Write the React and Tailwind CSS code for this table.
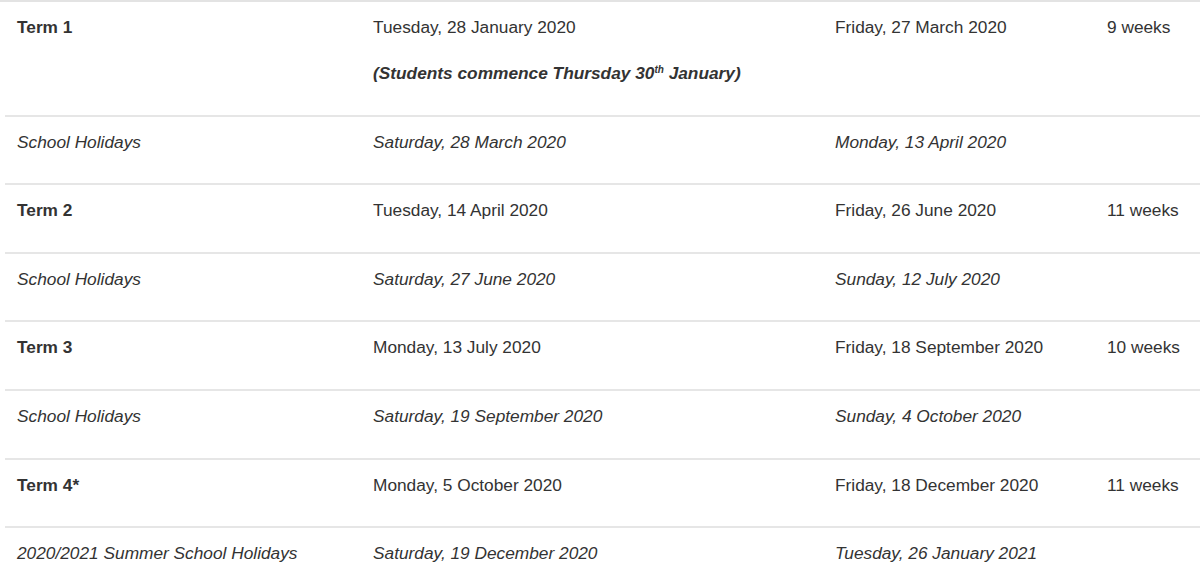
import React from "react";

const rows = [
  { name: "Term 1", start: "Tuesday, 28 January 2020", end: "Friday, 27 March 2020", weeks: "9 weeks", term: true, note: true },
  { name: "School Holidays", start: "Saturday, 28 March 2020", end: "Monday, 13 April 2020" },
  { name: "Term 2", start: "Tuesday, 14 April 2020", end: "Friday, 26 June 2020", weeks: "11 weeks", term: true },
  { name: "School Holidays", start: "Saturday, 27 June 2020", end: "Sunday, 12 July 2020" },
  { name: "Term 3", start: "Monday, 13 July 2020", end: "Friday, 18 September 2020", weeks: "10 weeks", term: true },
  { name: "School Holidays", start: "Saturday, 19 September 2020", end: "Sunday, 4 October 2020" },
  { name: "Term 4*", start: "Monday, 5 October 2020", end: "Friday, 18 December 2020", weeks: "11 weeks", term: true },
  { name: "2020/2021 Summer School Holidays", start: "Saturday, 19 December 2020", end: "Tuesday, 26 January 2021" },
];

function Cell({ children }) {
  return <div className="pl-3 pr-2 pt-3 pb-[8.6px]">{children}</div>;
}

export default function App() {
  return (
    <div
      className="w-[1200px] h-[580px] overflow-hidden bg-white text-[#333333] text-[17.3px] leading-[26px] border-t-2 border-[#e3e3e3]"
      style={{ fontFamily: '"Liberation Sans", Arial, sans-serif' }}
    >
      <div className="ml-[5px]">
        {rows.map((r, i) => (
          <div
            key={i}
            className={`grid grid-cols-[356px_462px_272px_1fr] border-b-2 border-[#e6e6e6] ${r.term ? "" : "italic"}`}
          >
            <Cell>
              <p className={`mb-5 ${r.term ? "font-bold" : ""}`}>{r.name}</p>
            </Cell>
            <Cell>
              <p className="mb-5">{r.start}</p>
              {r.note && (
                <p className="mb-5 font-bold italic">
                  (Students commence Thursday 30<sup className="text-[10px] align-[6px] leading-none top-0">th</sup> January)
                </p>
              )}
            </Cell>
            <Cell>
              <p className="mb-5">{r.end}</p>
            </Cell>
            <Cell>
              <p className="mb-5 whitespace-nowrap">{r.weeks}</p>
            </Cell>
          </div>
        ))}
      </div>
    </div>
  );
}
